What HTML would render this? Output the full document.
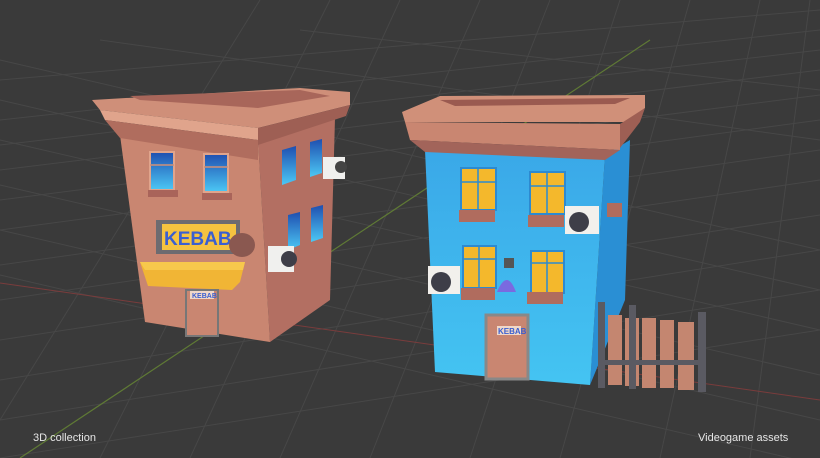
<!DOCTYPE html>
<html><head><meta charset="utf-8"><style>
html,body{margin:0;padding:0;background:#3a3a3a;width:820px;height:458px;overflow:hidden}
.t{position:absolute;top:432px;font:11px "Liberation Sans",sans-serif;color:#e6e6e6}
</style></head><body>
<svg width="820" height="458" viewBox="0 0 820 458" style="position:absolute;left:0;top:0">
<defs>
<linearGradient id="bw" x1="0" y1="0" x2="0" y2="1"><stop offset="0" stop-color="#1f4fb0"/><stop offset="1" stop-color="#4cc8f5"/></linearGradient>
<linearGradient id="bl" x1="0" y1="0" x2="0" y2="1"><stop offset="0" stop-color="#3aa8e8"/><stop offset="1" stop-color="#44c4f2"/></linearGradient>
</defs>
<rect width="820" height="458" fill="#3a3a3a"/>
<g stroke="#474747" stroke-width="1" fill="none">
<path d="M0 80 L820 10 M0 120 L820 30 M0 145 L820 50 M0 170 L820 70 M0 200 L820 95 M0 230 L820 120 M0 265 L820 150 M0 300 L820 180 M0 340 L820 215 M0 380 L820 250 M0 420 L820 290 M0 458 L820 330"/>
<path d="M0 60 L820 250 M0 100 L820 290 M0 140 L820 330 M0 185 L820 375 M0 230 L820 420 M0 275 L820 465 M100 40 L820 140 M300 30 L820 90"/>
<path d="M0 420 L260 0 M100 458 L330 0 M190 458 L400 0 M280 458 L480 0 M370 458 L550 0 M470 458 L620 0 M560 458 L690 0 M660 458 L760 0 M750 458 L810 0"/>
</g>
<path d="M0 283 L820 400" stroke="#7a3c3c" stroke-width="1"/>
<path d="M20 458 L650 40" stroke="#5f7a35" stroke-width="1.2"/>
<!-- left building -->
<polygon points="258,140 335,118 330,300 270,342" fill="#b36f62"/>
<polygon points="120,135 258,140 270,342 145,322" fill="#c98671"/>
<polygon points="92,100 300,88 350,92 350,105 258,128 100,110" fill="#cf8f79"/>
<polygon points="100,110 258,128 258,140 105,120" fill="#e0a48c"/>
<polygon points="105,120 258,140 258,160 120,138" fill="#b06d5e"/>
<polygon points="258,128 350,105 346,116 258,145" fill="#9e5f54"/>
<polygon points="130,96 300,90 330,96 258,108 140,100" fill="#a8665a"/>
<rect x="150" y="152" width="24" height="38" fill="url(#bw)" stroke="#e0a48c" stroke-width="2"/>
<rect x="204" y="154" width="24" height="38" fill="url(#bw)" stroke="#e0a48c" stroke-width="2"/>
<path d="M150 165 H174 M204 167 H228" stroke="#d09078" stroke-width="1.5"/>
<rect x="148" y="190" width="30" height="7" fill="#a9645a"/>
<rect x="202" y="193" width="30" height="7" fill="#a9645a"/>
<polygon points="282,150 296,146 296,180 282,185" fill="url(#bw)"/>
<polygon points="310,142 322,139 322,173 310,177" fill="url(#bw)"/>
<polygon points="288,215 300,212 300,245 288,250" fill="url(#bw)"/>
<polygon points="311,208 323,205 323,238 311,242" fill="url(#bw)"/>
<rect x="323" y="157" width="22" height="22" fill="#f0f0ee"/><circle cx="341" cy="167" r="6" fill="#444"/>
<rect x="268" y="246" width="26" height="26" fill="#f0f0ee"/><circle cx="289" cy="259" r="8" fill="#3e3e48"/>
<rect x="156" y="220" width="84" height="34" fill="#6d6b70"/>
<rect x="162" y="224" width="74" height="26" fill="#f5c340"/>
<text x="164" y="245" font-family="Liberation Sans" font-weight="bold" font-size="19" fill="#3a5fd0">KEBAB</text>
<ellipse cx="242" cy="245" rx="13" ry="12" fill="#8a5850"/>
<polygon points="140,262 245,262 240,282 232,290 148,286" fill="#f1b535"/>
<polygon points="140,262 245,262 243,270 145,270" fill="#f7c84c"/>
<rect x="186" y="290" width="32" height="46" fill="#c98671" stroke="#777" stroke-width="2"/>
<rect x="190" y="291" width="24" height="8" fill="#f0d8c8"/>
<text x="192" y="298" font-family="Liberation Sans" font-weight="bold" font-size="7" fill="#3a5fd0">KEBAB</text>
<!-- right building -->
<polygon points="605,155 630,140 625,300 590,385" fill="#2a8fd4"/>
<polygon points="425,150 605,155 590,385 435,372" fill="url(#bl)"/>
<polygon points="402,112 440,96 645,95 645,108 625,122 405,122" fill="#d09079"/>
<polygon points="440,100 630,98 615,104 455,106" fill="#9a5a50"/>
<polygon points="405,122 620,124 620,150 410,140" fill="#c98671"/>
<polygon points="410,140 620,150 605,160 425,152" fill="#a2645a"/>
<polygon points="620,124 645,108 640,122 620,148" fill="#9e5f54"/>
<rect x="461" y="168" width="35" height="42" fill="#f4b82c" stroke="#2d8ad0" stroke-width="2"/>
<rect x="530" y="172" width="35" height="42" fill="#f4b82c" stroke="#2d8ad0" stroke-width="2"/>
<rect x="463" y="246" width="33" height="42" fill="#f4b82c" stroke="#2d8ad0" stroke-width="2"/>
<rect x="531" y="251" width="33" height="42" fill="#f4b82c" stroke="#2d8ad0" stroke-width="2"/>
<path d="M478 168 V210 M461 182 H496 M547 172 V214 M530 186 H565 M479 246 V288 M463 259 H496 M547 251 V293 M531 263 H564" stroke="#2d8ad0" stroke-width="1.5"/>
<rect x="459" y="210" width="36" height="12" fill="#b06c5e"/>
<rect x="528" y="215" width="36" height="12" fill="#b06c5e"/>
<rect x="461" y="288" width="34" height="12" fill="#b06c5e"/>
<rect x="527" y="292" width="36" height="12" fill="#b06c5e"/>
<rect x="565" y="206" width="34" height="28" fill="#f2f0ec"/><circle cx="579" cy="222" r="10" fill="#3e3e48"/>
<rect x="428" y="266" width="32" height="28" fill="#f2f0ec"/><circle cx="441" cy="282" r="10" fill="#3e3e48"/>
<rect x="504" y="258" width="10" height="10" fill="#555"/>
<path d="M497 292 Q507 268 516 292 Z" fill="#7a6ae0"/>
<rect x="607" y="203" width="15" height="14" fill="#b06c5e"/>
<rect x="486" y="315" width="42" height="64" fill="#c98671" stroke="#888" stroke-width="3"/>
<rect x="497" y="326" width="24" height="9" fill="#f0d8c8"/>
<text x="498" y="334" font-family="Liberation Sans" font-weight="bold" font-size="8" fill="#3a5fd0">KEBAB</text>
<!-- fence -->
<g fill="#c48670"><rect x="608" y="315" width="14" height="70"/><rect x="625" y="318" width="14" height="68"/><rect x="642" y="318" width="14" height="70"/><rect x="660" y="320" width="14" height="68"/><rect x="678" y="322" width="16" height="68"/></g>
<g fill="#5a5a62"><rect x="598" y="302" width="7" height="86"/><rect x="629" y="305" width="7" height="84"/><rect x="698" y="312" width="8" height="80"/><rect x="603" y="360" width="100" height="5"/></g>
</svg>
<div class="t" style="left:33px">3D collection</div>
<div class="t" style="left:698px">Videogame assets</div>
</body></html>
